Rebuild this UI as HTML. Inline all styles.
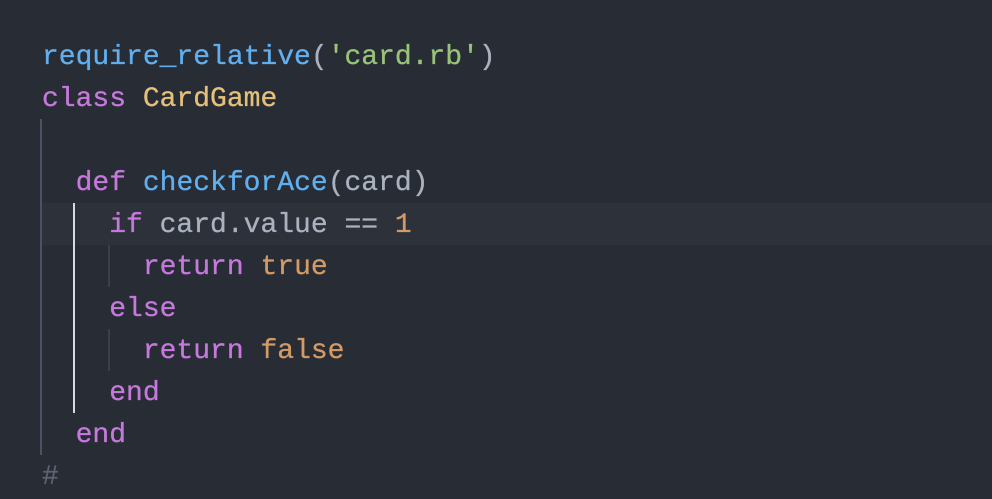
<!DOCTYPE html>
<html><head><style>
html,body{margin:0;padding:0;background:#282c34;width:992px;height:482px;overflow:hidden}
.ed{position:absolute;left:42px;top:37px;font-family:"Liberation Mono",monospace;font-size:28px;line-height:42px;color:#abb2bf;-webkit-text-stroke:0.3px}
.l{height:42px;white-space:pre}
.f{color:#61afef}.s{color:#98c379}.k{color:#c678dd}.c{color:#e5c07b}.n{color:#d19a66}.g{color:#5c6370}
.hl{position:absolute;left:42px;right:0;top:203px;height:42px;background:#2c313a}
.gd{position:absolute;width:2px}
</style></head><body>
<div class="hl"></div>
<div class="gd" style="left:40px;top:119px;height:336px;background:#4b5263"></div>
<div class="gd" style="left:73px;top:203px;height:210px;background:#d7dae0"></div>
<div class="gd" style="left:108px;top:245px;height:42px;background:#3b4048"></div>
<div class="gd" style="left:108px;top:329px;height:42px;background:#3b4048"></div>
<div class="ed"><div class="l"><span class="f">require_relative</span>(<span class="s">'card.rb'</span>)</div><div class="l"><span class="k">class</span> <span class="c">CardGame</span></div><div class="l"> </div><div class="l">  <span class="k">def</span> <span class="f">checkforAce</span>(card)</div><div class="l">    <span class="k">if</span> card.value == <span class="n">1</span></div><div class="l">      <span class="k">return</span> <span class="n">true</span></div><div class="l">    <span class="k">else</span></div><div class="l">      <span class="k">return</span> <span class="n">false</span></div><div class="l">    <span class="k">end</span></div><div class="l">  <span class="k">end</span></div><div class="l"><span class="g">#</span></div></div>
</body></html>
